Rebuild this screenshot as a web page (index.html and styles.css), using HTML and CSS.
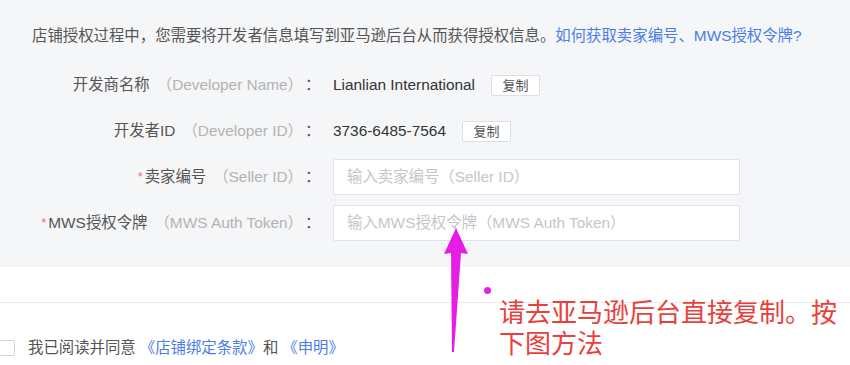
FILE: index.html
```html
<!DOCTYPE html>
<html lang="zh-CN">
<head>
<meta charset="utf-8">
<title>店铺授权</title>
<link rel="stylesheet" href="styles.css">
</head>
<body>
<div class="page">
  <section class="auth">
    <p class="intro">店铺授权过程中，您需要将开发者信息填写到亚马逊后台从而获得授权信息。<a class="link" href="#">如何获取卖家编号、MWS授权令牌?</a></p>
    <div class="form">
      <div class="row">
        <div class="label"><span class="cn">开发商名称</span><span class="en">（Developer Name）</span><span class="colon">：</span></div>
        <div class="value"><span class="text">Lianlian International</span><button class="copy" type="button">复制</button></div>
      </div>
      <div class="row">
        <div class="label"><span class="cn">开发者ID</span><span class="en">（Developer ID）</span><span class="colon">：</span></div>
        <div class="value"><span class="text">3736-6485-7564</span><button class="copy" type="button">复制</button></div>
      </div>
      <div class="row">
        <div class="label"><span class="req">*</span><span class="cn">卖家编号</span><span class="en">（Seller ID）</span><span class="colon">：</span></div>
        <div class="value"><input class="field" type="text" placeholder="输入卖家编号（Seller ID）"></div>
      </div>
      <div class="row">
        <div class="label"><span class="req">*</span><span class="cn">MWS授权令牌</span><span class="en">（MWS Auth Token）</span><span class="colon">：</span></div>
        <div class="value"><input class="field" type="text" placeholder="输入MWS授权令牌（MWS Auth Token）"></div>
      </div>
    </div>
  </section>
  <section class="bottom">
    <div class="divider"></div>
    <div class="agree">
      <span class="checkbox"></span>
      <span class="agree-text">我已阅读并同意</span>
      <a class="link doc" href="#">《店铺绑定条款》</a><span class="agree-text">和</span>
      <a class="link doc" href="#">《申明》</a>
    </div>
  </section>

  <svg class="arrow" width="30" height="130" viewBox="0 0 30 130" xmlns="http://www.w3.org/2000/svg">
    <polygon points="12,0 24,26 17,25 10,124 8,124 7,25 0,26" fill="#e41ee4"/>
  </svg>
  <span class="dot"></span>
  <div class="note">
    <div class="note-line">请去亚马逊后台直接复制。按</div>
    <div class="note-line">下图方法</div>
  </div>
</div>
</body>
</html>
```

FILE: styles.css
```css
html, body {
  margin: 0;
  padding: 0;
  background: #ffffff;
}

body {
  font-family: "Liberation Sans", "Noto Sans CJK SC", sans-serif;
  font-size: 15.4px;
  color: #555;
}

.page {
  position: relative;
  width: 850px;
  height: 365px;
  overflow: hidden;
}

.auth {
  background: #f5f6f8;
  height: 267px;
  box-sizing: border-box;
  padding: 25px 0 0 0;
}

.intro {
  margin: 0;
  padding-left: 32px;
  line-height: 22px;
  color: #555;
  white-space: nowrap;
}

.link {
  color: #4a7de8;
  text-decoration: none;
}

.form {
  margin-top: 20px;
  display: flex;
  flex-direction: column;
  gap: 10px;
}

.row {
  display: flex;
  align-items: center;
  height: 36px;
}

.label {
  width: 320px;
  flex: none;
  text-align: right;
  white-space: nowrap;
  line-height: 22px;
}

.cn {
  color: #555;
}

.en {
  color: #b3b3b3;
  padding-left: 7px;
}

.colon {
  color: #555;
  display: inline-block;
  width: 15px;
  text-align: left;
  margin-left: 2px;
}

.req {
  color: #f0657a;
  font-size: 12px;
  margin-right: 2px;
  vertical-align: 1px;
}

.value {
  margin-left: 13px;
  display: flex;
  align-items: center;
  gap: 16px;
}

.text {
  color: #333;
  line-height: 22px;
}

.copy {
  font-family: "Liberation Sans", "Noto Sans CJK SC", sans-serif;
  font-size: 13px;
  color: #555;
  background: #ffffff;
  border: 1px solid #dcdfe6;
  border-radius: 2px;
  width: 49px;
  height: 21px;
  padding: 0;
  line-height: 19px;
}

.field {
  width: 407px;
  height: 36px;
  box-sizing: border-box;
  border: 1px solid #e0e2e7;
  border-radius: 2px;
  background: #ffffff;
  padding: 0 13px;
  font-family: "Liberation Sans", "Noto Sans CJK SC", sans-serif;
  font-size: 15.4px;
  color: #333;
  outline: none;
}

.field::placeholder {
  color: #c4c6cc;
}

.bottom {
  background: #ffffff;
}

.divider {
  height: 35px;
  border-bottom: 1px solid #ececec;
}

.agree {
  display: flex;
  align-items: center;
  margin-top: 35px;
  height: 20px;
  line-height: 20px;
  white-space: nowrap;
}

.checkbox {
  display: inline-block;
  width: 16px;
  height: 16px;
  box-sizing: border-box;
  border: 1px solid #d4d4d4;
  border-radius: 2px;
  background: #fff;
  margin-left: -1px;
  margin-right: 13px;
}

.agree-text {
  color: #555;
}

.doc {
  margin-left: 4px;
}

.arrow {
  position: absolute;
  left: 444px;
  top: 228px;
}

.dot {
  position: absolute;
  left: 484px;
  top: 287px;
  width: 7px;
  height: 7px;
  border-radius: 50%;
  background: #e41ee4;
}

.note {
  position: absolute;
  left: 499px;
  top: 292px;
  font-family: "Noto Sans CJK SC", sans-serif;
  font-size: 26px;
  color: #e8413c;
  white-space: nowrap;
}

.note-line {
  height: 31px;
  line-height: 38px;
}
```
